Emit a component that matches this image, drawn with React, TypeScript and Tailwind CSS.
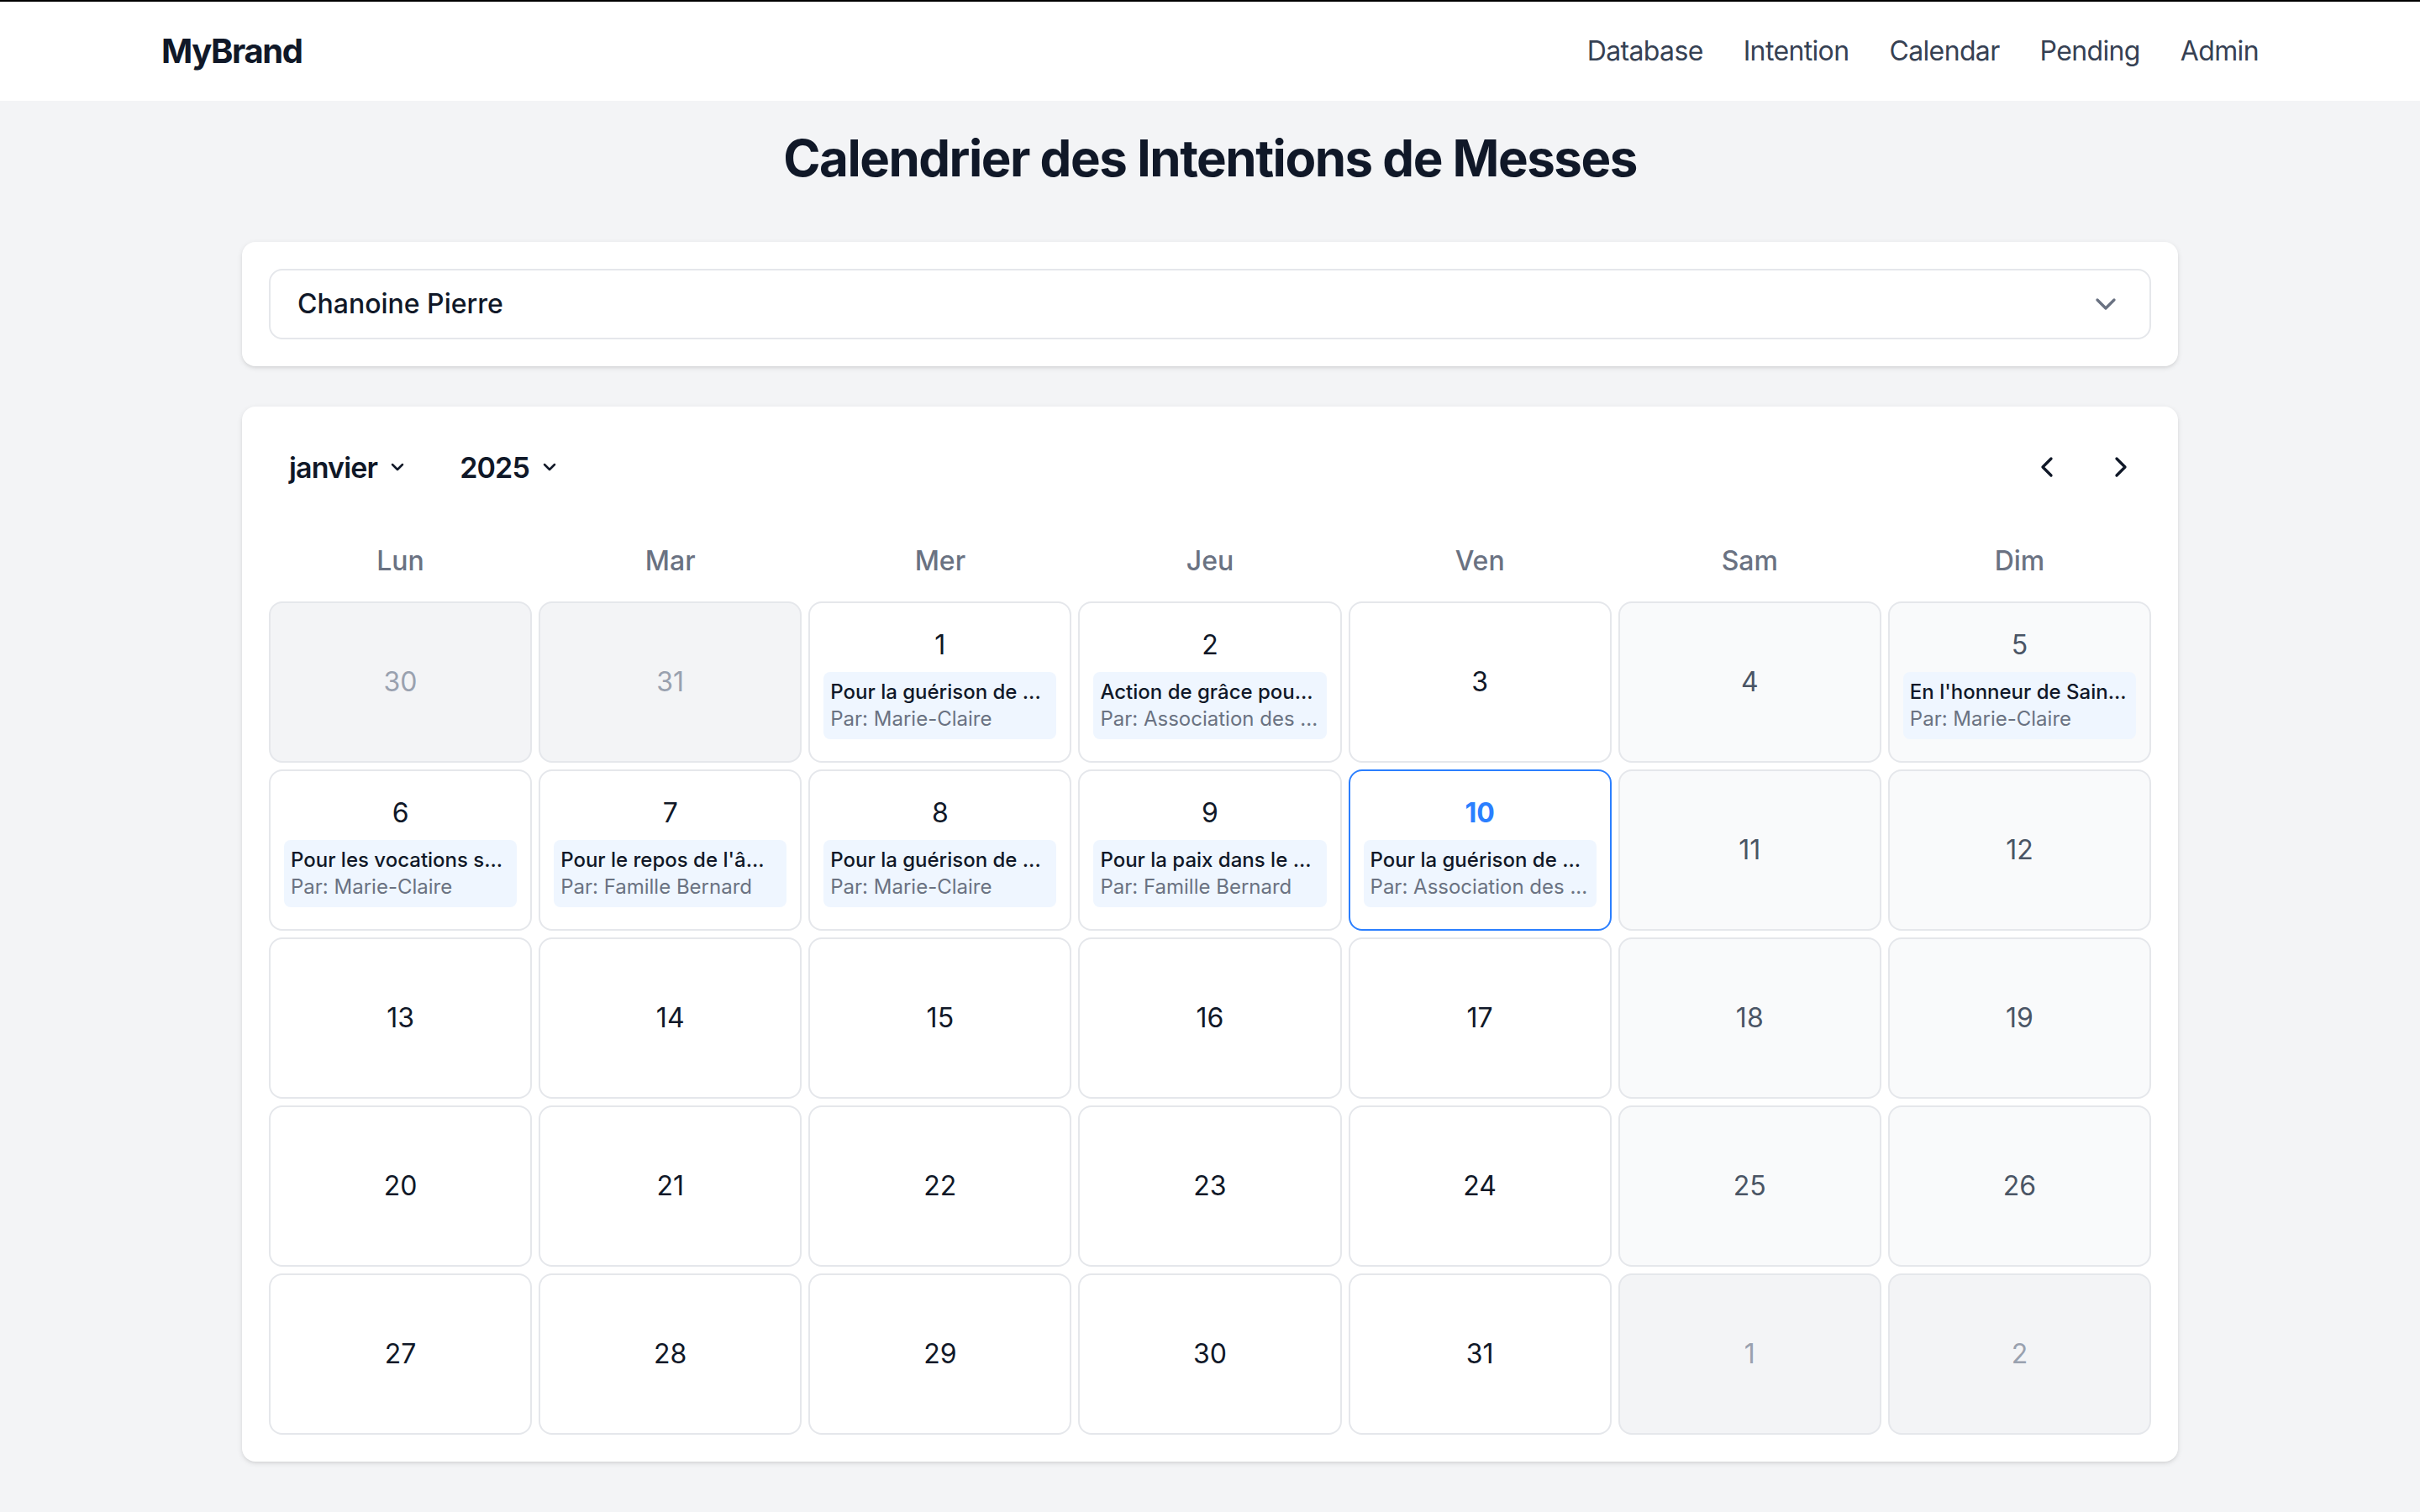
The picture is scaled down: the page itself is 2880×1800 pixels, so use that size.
import React from "react";
import { ChevronDown, ChevronLeft, ChevronRight } from "lucide-react";

type Intention = { title: string; by: string };
type Day = {
  n: number;
  outside?: boolean;
  weekend?: boolean;
  today?: boolean;
  intention?: Intention;
};

const weekdays = ["Lun", "Mar", "Mer", "Jeu", "Ven", "Sam", "Dim"];

const intentions: Record<number, Intention> = {
  1: { title: "Pour la guérison de ...", by: "Par: Marie-Claire" },
  2: { title: "Action de grâce pou...", by: "Par: Association des ..." },
  5: { title: "En l'honneur de Sain...", by: "Par: Marie-Claire" },
  6: { title: "Pour les vocations s...", by: "Par: Marie-Claire" },
  7: { title: "Pour le repos de l'â...", by: "Par: Famille Bernard" },
  8: { title: "Pour la guérison de ...", by: "Par: Marie-Claire" },
  9: { title: "Pour la paix dans le ...", by: "Par: Famille Bernard" },
  10: { title: "Pour la guérison de ...", by: "Par: Association des ..." },
};

function buildDays(): Day[] {
  const days: Day[] = [];
  days.push({ n: 30, outside: true });
  days.push({ n: 31, outside: true });
  for (let d = 1; d <= 31; d++) {
    const idx = days.length % 7;
    days.push({
      n: d,
      weekend: idx === 5 || idx === 6,
      today: d === 10,
      intention: intentions[d],
    });
  }
  days.push({ n: 1, outside: true });
  days.push({ n: 2, outside: true });
  return days;
}

function DayCell({ day }: { day: Day }) {
  let cls =
    "h-24 rounded-lg border flex flex-col items-center justify-center gap-1 px-2 ";
  let num = "text-base leading-6 ";
  if (day.outside) {
    cls += "bg-gray-100 border-gray-200";
    num += "text-gray-400";
  } else if (day.today) {
    cls += "bg-white border-blue-500";
    num += "text-blue-500 font-bold";
  } else if (day.weekend) {
    cls += "bg-gray-50 border-gray-200";
    num += "text-gray-600";
  } else {
    cls += "bg-white border-gray-200";
    num += "text-gray-900";
  }
  return (
    <div className={cls}>
      <span className={num}>{day.n}</span>
      {day.intention && (
        <div className="w-full rounded bg-blue-50 p-1">
          <div className="truncate text-xs leading-4 font-medium text-gray-900">
            {day.intention.title}
          </div>
          <div className="truncate text-xs leading-4 text-gray-500">
            {day.intention.by}
          </div>
        </div>
      )}
    </div>
  );
}

export default function App() {
  const days = buildDays();
  return (
    <div className="[zoom:2] min-h-[900px] bg-gray-100 font-['Inter','Liberation_Sans',sans-serif]">
      <nav className="bg-white border-t border-black">
        <div className="max-w-[1280px] mx-auto px-4 h-[59px] flex items-center justify-between">
          <span className="text-xl font-bold tracking-[-0.035em] text-gray-900">
            MyBrand
          </span>
          <div className="flex items-center gap-6 text-base tracking-[-0.02em] text-gray-700">
            <a>Database</a>
            <a>Intention</a>
            <a>Calendar</a>
            <a>Pending</a>
            <a>Admin</a>
          </div>
        </div>
      </nav>

      <main className="max-w-6xl mx-auto pt-4 pb-8">
        <h1 className="text-center text-3xl font-bold tracking-tight text-gray-900 mb-8">
          Calendrier des Intentions de Messes
        </h1>

        <div className="bg-white rounded-lg shadow-sm p-4 mb-6">
          <div className="rounded-lg border border-gray-200 bg-white flex items-center justify-between px-4 py-2">
            <span className="text-base leading-6 font-medium text-gray-900">
              Chanoine Pierre
            </span>
            <ChevronDown className="h-5 w-5 text-gray-500" strokeWidth={2} />
          </div>
        </div>

        <div className="bg-white rounded-lg shadow-sm p-4">
          <div className="h-10 flex items-center justify-between mb-4">
            <div className="flex items-center gap-[31px] pl-3">
              <button className="flex items-center gap-1.5 text-[17px] font-semibold tracking-tight text-gray-900">
                janvier
                <ChevronDown className="h-3 w-3 text-gray-900" strokeWidth={2.5} />
              </button>
              <button className="flex items-center gap-1.5 text-[17px] font-semibold tracking-tight text-gray-900">
                2025
                <ChevronDown className="h-3 w-3 text-gray-900" strokeWidth={2.5} />
              </button>
            </div>
            <div className="flex items-center gap-2">
              <button className="p-2 rounded-md text-gray-900">
                <ChevronLeft className="h-5 w-5" strokeWidth={2} />
              </button>
              <button className="p-2 rounded-md text-gray-900">
                <ChevronRight className="h-5 w-5" strokeWidth={2} />
              </button>
            </div>
          </div>

          <div className="grid grid-cols-7 gap-1">
            {weekdays.map((w) => (
              <div
                key={w}
                className="py-2 text-center text-base leading-6 font-medium text-gray-500"
              >
                {w}
              </div>
            ))}
            {days.map((d, i) => (
              <DayCell key={i} day={d} />
            ))}
          </div>
        </div>
      </main>
    </div>
  );
}
